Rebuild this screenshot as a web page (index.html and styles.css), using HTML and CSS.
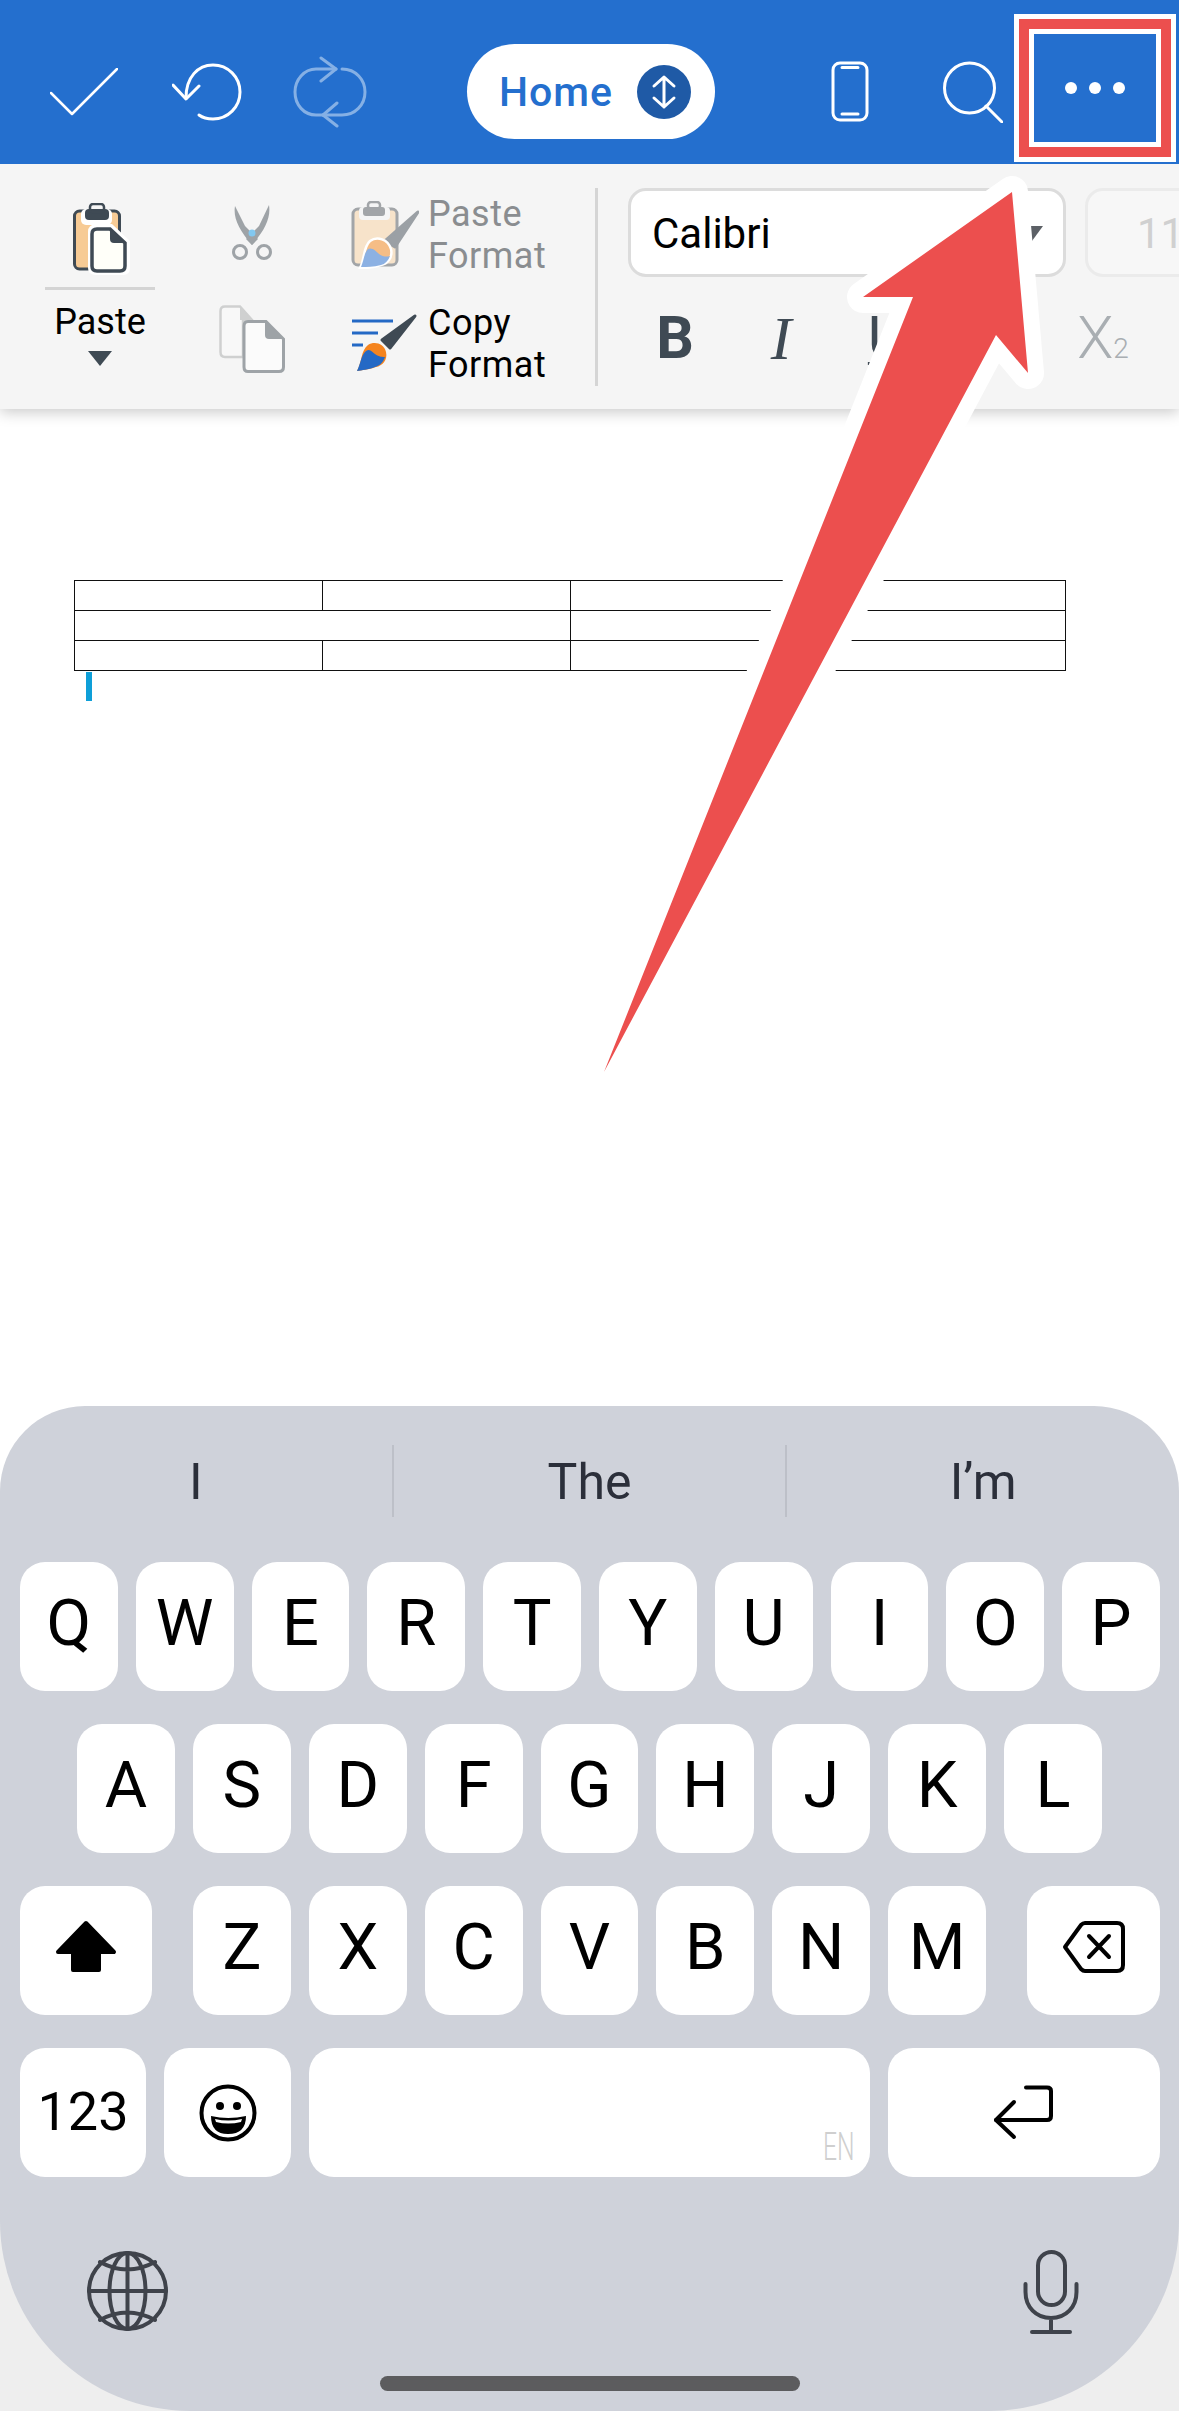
FILE: index.html
```html
<!DOCTYPE html>
<html lang="en">

<head>
    <meta charset="UTF-8">
    <meta name="viewport" content="width=device-width, initial-scale=1.0">
    <title>Document</title>
    <link rel="stylesheet" href="styles.css">
</head>

<body>
    <div id="page">
        <!-- top blue bar, svg viewBoxes use page coordinates -->
        <header id="topbar">
            <svg class="ic-check" width="68" height="48" viewBox="50 70 68 48"><path d="M51 95L72 116L117 71" /></svg>
            <svg class="ic-undo" width="70" height="58" viewBox="172 63 70 58"><path d="M199 115C203 118 208 119 213 119C228 119 240 107 240 92C240 77 228 65 213 65C198 65 186 77 186 98" /><path d="M173 85L186 99L199 86" /></svg>
            <svg class="ic-redo" width="74" height="72" viewBox="293 56 74 72"><path d="M336 69H316C304 69 295 80 295 92C295 105 304 115 316 115H323" /><path d="M321 58L336 69L321 81" /><path d="M342 69C356 69 365 80 365 92C365 105 355 115 342 115H323" /><path d="M337 103L323 115L337 126" /></svg>
            <div id="home-pill">
                <span>Home</span>
                <span id="home-arrow">
                    <svg width="30" height="36" viewBox="0 0 30 36"><path d="M15 3V33M5 12L15 3L25 12M5 24L15 33L25 24" /></svg>
                </span>
            </div>
            <svg class="ic-phone" width="38" height="62" viewBox="830 61 38 62"><rect x="832" y="63" width="34" height="57" rx="7" /><path d="M841 67.5H857M841 114H857" /></svg>
            <svg class="ic-search" width="60" height="62" viewBox="942 60 60 62"><circle cx="968.5" cy="87" r="25" /><path d="M985 105L1001 121" /></svg>
            <div id="more-btn"><i></i><i></i><i></i></div>
        </header>

        <section id="ribbon">
            <div class="paste-col">
                <svg width="110" height="72" viewBox="45 203 110 72">
                    <rect x="74.5" y="211" width="45" height="58" rx="5" fill="#f7cb95" stroke="#3f4a54" stroke-width="3" />
                    <rect x="81" y="209" width="31" height="16" rx="5" fill="#fff" />
                    <rect x="85" y="209" width="24" height="11" rx="4" fill="#3f4a54" />
                    <rect x="90" y="204" width="14" height="8" rx="3" fill="none" stroke="#3f4a54" stroke-width="2.5" />
                    <path d="M97 224H112L130 241V268Q130 275 123 275H96Q88 275 88 268V232Q88 224 97 224Z" fill="#fff" />
                    <path d="M97 229H110L125 243V266Q125 271 120 271H97Q92 271 92 266V234Q92 229 97 229Z" fill="#fffff9" stroke="#3f4a54" stroke-width="3.5" />
                    <path d="M110 229L125 243H114Q110 243 110 239Z" fill="#3f4a54" />
                </svg>
                <div class="paste-rule"></div>
                <div class="paste-label">Paste</div>
                <div class="paste-caret"></div>
            </div>

            <div class="clip-col">
                <svg width="66" height="56" viewBox="219 205 66 56">
                    <path d="M235 206C233 218 239 230 252 245L258 239L245 226Z" fill="#9ea3a7" />
                    <path d="M269 205C271 218 265 230 252 245L246 239L259 226Z" fill="#9ea3a7" />
                    <circle cx="240" cy="252" r="6.5" fill="none" stroke="#9ea3a7" stroke-width="3" />
                    <circle cx="264" cy="252" r="6.5" fill="none" stroke="#9ea3a7" stroke-width="3" />
                    <circle cx="252" cy="233" r="3.5" fill="#82c8f0" />
                </svg>
                <svg class="copy-ic" width="66" height="69" viewBox="219 305 66 69">
                    <path d="M225 306.5H240L252 320H243V357H225Q220.500 357 220.500 352V311Q220.500 306.500 225 306.500Z" fill="#f8f8f8" stroke="#cfd0d0" stroke-width="2.500" />
                    <path d="M240 307L252 320H240Z" fill="#cfd0d0" />
                    <path d="M248 321.500H266L283.500 339V367Q283.500 371.500 279 371.500H248Q244 371.500 244 367V326Q244 321.500 248 321.500Z" fill="#fbfbfb" stroke="#9ea3a7" stroke-width="3" />
                    <path d="M265 321L284 339H269Q265 339 265 335Z" fill="#9ea3a7" />
                </svg>
            </div>

            <div class="format-col">
                <div class="format-row muted">
                    <svg width="68" height="68" viewBox="351 200 68 68">
                        <rect x="353" y="208" width="44" height="56" rx="5" fill="#f7e3ca" stroke="#a2a5a8" stroke-width="3" />
                        <rect x="359" y="206" width="31" height="13" rx="4" fill="#f5f5f5" />
                        <rect x="363" y="206" width="22" height="9" rx="3" fill="#a2a5a8" />
                        <rect x="368" y="201" width="12" height="7" rx="3" fill="none" stroke="#a2a5a8" stroke-width="2.500" />
                        <path d="M418 211L385 240L395 246Z" fill="#9ba0a5" stroke="#9ba0a5" stroke-width="3" stroke-linejoin="round" />
                        <path d="M360 267C365 258 363 246 370 240C377 235 388 238 391 248C393 257 387 263 381 264C373 267 366 267 360 267Z" fill="#f5bd86" stroke="#fff" stroke-width="2.500" />
                        <path d="M361 266C364 259 364 252 368 248C372 246 376 250 379 253C383 256 387 256 390 255C388 260 385 263 381 264C373 266 367 266 361 266Z" fill="#8cb1e3" />
                    </svg>
                    <span>Paste<br>Format</span>
                </div>
                <div class="format-row">
                    <svg width="68" height="60" viewBox="351 314 68 60">
                        <path d="M352 321H393M352 333H378M352 345H363" fill="none" stroke="#2469c5" stroke-width="3" />
                        <path d="M415 316L382 340L390 348Z" fill="#3f4a54" stroke="#3f4a54" stroke-width="3" stroke-linejoin="round" />
                        <path d="M357 371C362 362 361 350 368 345C374 341 384 343 386 352C388 360 382 366 376 367C368 370 362 370 357 371Z" fill="#f5841f" />
                        <path d="M357 371C361 363 361 355 366 351C370 348 372 352 375 354C379 357 383 357 385 357C383 363 379 366 375 367C368 370 362 370 357 371Z" fill="#2469c5" />
                    </svg>
                    <span>Copy<br>Format</span>
                </div>
            </div>

            <div class="ribbon-sep"></div>

            <div class="font-col">
                <div class="font-row">
                    <div class="font-box">Calibri<b class="font-caret"></b></div>
                    <div class="size-box">11</div>
                </div>
                <div class="style-row">
                    <span class="st st-b">B</span>
                    <span class="st st-i">I</span>
                    <span class="st st-u">U</span>
                    <span class="st st-x">X<small>2</small></span>
                </div>
            </div>
        </section>

        <main id="doc">
            <table id="doc-table">
                <tr><td></td><td></td><td></td><td></td></tr>
                <tr><td colspan="2"></td><td></td><td></td></tr>
                <tr><td></td><td></td><td></td><td></td></tr>
            </table>
            <div id="caret"></div>
        </main>

        <section id="keyboard">
            <div class="suggest">
                <span>I</span>
                <span>The</span>
                <span>I’m</span>
            </div>
            <div class="kb-row row-top">
                <div class="key">Q</div><div class="key">W</div><div class="key">E</div><div class="key">R</div><div class="key">T</div>
                <div class="key">Y</div><div class="key">U</div><div class="key">I</div><div class="key">O</div><div class="key">P</div>
            </div>
            <div class="kb-row row-mid">
                <div class="key">A</div><div class="key">S</div><div class="key">D</div><div class="key">F</div><div class="key">G</div>
                <div class="key">H</div><div class="key">J</div><div class="key">K</div><div class="key">L</div>
            </div>
            <div class="kb-row row-top">
                <div class="key key-shift">
                    <svg width="62" height="54" viewBox="56 1925 62 54"><path d="M87 1928L115 1957H100V1975H74V1957H59Z" fill="#000" stroke="#000" stroke-width="4" stroke-linejoin="round" /></svg>
                </div>
                <div class="key">Z</div><div class="key">X</div><div class="key">C</div><div class="key">V</div><div class="key">B</div><div class="key">N</div><div class="key">M</div>
                <div class="key key-back">
                    <svg width="64" height="54" viewBox="1060 1925 64 54"><path d="M1083 1928H1115Q1121 1928 1121 1934V1970Q1121 1976 1115 1976H1083Q1081 1976 1079 1974L1063 1952L1079 1930Q1081 1928 1083 1928Z" /><path d="M1087 1941L1107 1962M1107 1941L1087 1962" /></svg>
                </div>
            </div>
            <div class="kb-row row-top">
                <div class="key key-num">123</div>
                <div class="key key-emoji">
                    <svg width="60" height="60" viewBox="197 2080 60 60">
                        <circle cx="227" cy="2110" r="26.500" fill="none" stroke="#000" stroke-width="4" />
                        <circle cx="219" cy="2103" r="4" fill="#000" />
                        <circle cx="236" cy="2103" r="4" fill="#000" />
                        <path d="M210 2113Q227 2117 245 2113Q245 2131 227 2131Q210 2131 210 2113Z" fill="#000" />
                        <path d="M214 2116Q227 2119 241 2116L240 2119Q227 2122 215 2119Z" fill="#fff" />
                    </svg>
                </div>
                <div class="key key-space"><span class="en">EN</span></div>
                <div class="key key-return">
                    <svg width="62" height="56" viewBox="994 2084 62 56"><path d="M1027 2086.500H1048Q1052 2086.500 1052 2090V2115Q1052 2119 1048 2119H997" /><path d="M1015 2101L997 2119L1015 2136" /></svg>
                </div>
            </div>
            <div class="kb-bottom">
                <svg width="84" height="84" viewBox="85 2249 84 84">
                    <ellipse cx="127.500" cy="2291" rx="38.500" ry="38" />
                    <ellipse cx="127.500" cy="2291" rx="18" ry="38" />
                    <path d="M127.500 2253V2329M89 2291H166M100 2262Q127 2277 155 2262M100 2320Q127 2305 155 2320" />
                </svg>
                <svg width="56" height="88" viewBox="1023 2244 56 88">
                    <rect x="1038" y="2247" width="27" height="53" rx="13.500" />
                    <path d="M1025.500 2279V2287C1025.500 2302 1036 2313 1051 2313C1066 2313 1076.500 2302 1076.500 2287V2279M1051 2313V2327M1032 2327H1070" />
                </svg>
            </div>
            <div class="home-bar"></div>
        </section>

        <!-- red callout arrow on top of everything -->
        <svg id="callout" width="1179" height="1100" viewBox="0 0 1179 1100">
            <polygon points="1012,192 863,297 913,297 604,1072 996,335 1028,373" />
        </svg>
    </div>
</body>

</html>
```

FILE: styles.css
```css
* {
    margin: 0;
    padding: 0;
    box-sizing: border-box;
}

html,
body {
    width: 1179px;
    height: 2411px;
    overflow: hidden;
    background: #fff;
    font-family: Roboto, "Liberation Sans", sans-serif;
}

svg {
    display: block;
    flex: none;
}

#page {
    position: relative;
    z-index: 0;
    width: 1179px;
    height: 2411px;
    display: flex;
    flex-direction: column;
}

/* grey shows through the round bottom corners of the keyboard */
#page::after {
    content: "";
    position: absolute;
    z-index: -1;
    left: 0;
    right: 0;
    bottom: 0;
    height: 200px;
    background: #eee;
}

/* top bar */
#topbar {
    position: relative;
    z-index: 2;
    height: 164px;
    flex: none;
    display: flex;
    align-items: center;
    padding: 19px 0 0 50px;
    background: #246fce;
}

#topbar svg {
    fill: none;
    stroke: #fff;
    stroke-width: 3;
    stroke-linecap: round;
    stroke-linejoin: round;
}

#topbar .ic-check {
    stroke-width: 2.5;
}

#topbar .ic-redo {
    stroke: #85b0e5;
}

.ic-undo {
    margin-left: 54px;
}

.ic-redo {
    margin-left: 51px;
}

#home-pill {
    width: 248px;
    height: 95px;
    margin-left: 100px;
    padding: 0 24px 0 32px;
    display: flex;
    align-items: center;
    justify-content: space-between;
    border-radius: 48px;
    background: #fff;
    color: #246fce;
    font-size: 41px;
    font-weight: 500;
    letter-spacing: 1px;
}

#home-arrow {
    width: 54px;
    height: 54px;
    display: flex;
    align-items: center;
    justify-content: center;
    border-radius: 50%;
    background: #1f5aa6;
}

.ic-phone {
    margin-left: 116px;
}

.ic-search {
    margin-left: 74px;
}

#more-btn {
    width: 122px;
    height: 108px;
    margin-left: 31px;
    align-self: flex-start;
    margin-top: 15px;
    display: flex;
    align-items: center;
    justify-content: center;
    gap: 12px;
    /* annotation frame */
    box-shadow: 0 0 0 5px #fff, 0 0 0 15px #ec4f4e, 0 0 0 20px #fff;
}

#more-btn i {
    width: 12px;
    height: 12px;
    border-radius: 50%;
    background: #fff;
}

/* ribbon */
#ribbon {
    position: relative;
    z-index: 1;
    height: 245px;
    flex: none;
    display: flex;
    align-items: flex-start;
    padding: 24px 0 0 45px;
    overflow: hidden;
    background: #f5f5f5;
    box-shadow: 0 3px 14px rgba(0, 0, 0, .22);
}

.paste-col {
    flex: none;
    width: 110px;
    padding-top: 15px;
}

.paste-rule {
    height: 3px;
    margin-top: 12px;
    background: #d4d4d4;
}

.paste-label {
    margin-top: 11px;
    font-size: 36px;
    line-height: 42px;
    text-align: center;
    color: #000;
}

.paste-caret {
    width: 0;
    height: 0;
    margin: 8px auto 0;
    border-left: 12px solid transparent;
    border-right: 12px solid transparent;
    border-top: 15px solid #3f4a54;
}

.clip-col {
    flex: none;
    width: 66px;
    margin-left: 64px;
    padding-top: 17px;
}

.copy-ic {
    margin-top: 44px;
}

.format-col {
    flex: none;
    width: 210px;
    margin-left: 66px;
    padding-top: 5px;
    display: flex;
    flex-direction: column;
    gap: 25px;
}

.format-row {
    display: flex;
    align-items: center;
    gap: 9px;
    font-size: 36px;
    line-height: 42px;
    letter-spacing: .5px;
    color: #000;
}

.format-row.muted {
    color: #8a8d90;
}

.ribbon-sep {
    width: 3px;
    height: 198px;
    margin-left: 34px;
    background: #d5d5d5;
    flex: none;
}

.font-col {
    flex: none;
    width: 590px;
    margin-left: 30px;
}

.font-row {
    display: flex;
    gap: 19px;
}

.font-box,
.size-box {
    flex: none;
    height: 89px;
    display: flex;
    align-items: center;
    padding-top: 2px;
    border-radius: 18px;
    font-size: 42px;
}

.font-box {
    width: 438px;
    padding-left: 21px;
    border: 3px solid #dcdcdc;
    background: #fff;
    color: #000;
}

.font-caret {
    width: 0;
    height: 0;
    margin-left: auto;
    margin-right: 20px;
    border-left: 11px solid transparent;
    border-right: 11px solid transparent;
    border-top: 15px solid #5c6066;
}

.size-box {
    width: 130px;
    padding-left: 49px;
    border: 3px solid #ebebeb;
    background: #f7f7f7;
    color: #d0d0d0;
}

.style-row {
    display: flex;
    margin: 31px 0 0 -6px;
    color: #3f4a54;
}

.st {
    width: 106px;
    height: 60px;
    line-height: 60px;
    text-align: center;
    font-size: 59px;
}

.st-b {
    font-weight: 700;
}

.st-i {
    font-family: "Liberation Serif", serif;
    font-style: italic;
    font-size: 62px;
}

.st-u {
    text-decoration: underline;
    text-decoration-thickness: 3px;
    text-underline-offset: 4px;
}

.st-x {
    margin-left: 110px;
    font-weight: 300;
    color: #a9aeb2;
}

.st-x small {
    font-size: 28px;
}

/* document */
#doc {
    flex: 1;
    padding: 171px 0 0 74px;
    background: #fff;
}

#doc-table {
    width: 992px;
    table-layout: fixed;
    border-collapse: collapse;
}

#doc-table td {
    height: 30px;
    border: 1px solid #111;
}

#caret {
    width: 6px;
    height: 29px;
    margin: 1px 0 0 12px;
    background: #0e9fd8;
}

/* keyboard */
#keyboard {
    height: 1005px;
    flex: none;
    padding-top: 39px;
    border-radius: 85px 85px 190px 190px;
    background: #cfd2da;
}

.suggest {
    height: 72px;
    margin-bottom: 45px;
    display: flex;
    font-size: 50px;
    color: #2b2f3a;
}

.suggest span {
    flex: 1;
    display: flex;
    align-items: center;
    justify-content: center;
    padding-top: 2px;
    border-left: 2px solid #bdc0c8;
}

.suggest span:first-child {
    border-left: 0;
}

.kb-row {
    display: flex;
    gap: 18px;
    height: 129px;
    margin-bottom: 33px;
}

.row-top {
    padding: 0 19px 0 20px;
}

.row-mid {
    padding: 0 77px;
}

.key {
    flex: 1;
    display: flex;
    align-items: center;
    justify-content: center;
    padding-bottom: 7px;
    border-radius: 25px;
    background: #fff;
    color: #000;
    font-size: 65px;
}

.key-shift {
    flex: none;
    width: 132px;
    margin-right: 23px;
}

.key-back {
    flex: none;
    width: 133px;
    margin-left: 23px;
}

.key-back svg,
.key-return svg {
    fill: none;
    stroke: #000;
    stroke-width: 4;
    stroke-linecap: round;
    stroke-linejoin: round;
}

.key-num {
    flex: none;
    width: 126px;
    padding-bottom: 3px;
    font-size: 54px;
}

.key-emoji {
    flex: none;
    width: 127px;
    padding-bottom: 0;
}

.key-space {
    position: relative;
    flex: none;
    width: 561px;
}

.en {
    position: absolute;
    right: 15px;
    bottom: 11px;
    font-size: 38px;
    font-weight: 300;
    line-height: 38px;
    color: #cfcfcf;
    transform: scaleX(.65);
    transform-origin: right bottom;
}

.key-return {
    flex: none;
    width: 272px;
    padding-bottom: 0;
}

.kb-bottom {
    display: flex;
    justify-content: space-between;
    padding: 39px 100px 0 85px;
}

.kb-bottom svg {
    fill: none;
    stroke: #3f434b;
    stroke-width: 4;
    stroke-linecap: round;
}

.home-bar {
    width: 420px;
    height: 15px;
    margin: 39px auto 0;
    border-radius: 8px;
    background: #5c5c5e;
}

/* callout */
#callout {
    position: absolute;
    left: 0;
    top: 0;
    z-index: 3;
    pointer-events: none;
}

#callout polygon {
    fill: #ec4f4e;
    stroke: #fff;
    stroke-width: 32;
    stroke-linejoin: round;
    paint-order: stroke;
}
```
